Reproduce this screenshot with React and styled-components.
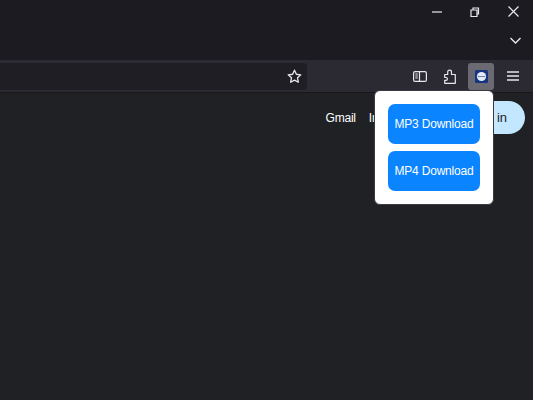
import React from 'react';
import styled, { createGlobalStyle } from 'styled-components';

const GlobalStyle = createGlobalStyle`
  html, body {
    margin: 0;
    padding: 0;
    background: #202124;
    overflow: hidden;
  }
`;

const Page = styled.div`
  position: relative;
  width: 533px;
  height: 400px;
  overflow: hidden;
  display: flex;
  flex-direction: column;
  background: #202124;
  font-family: "Liberation Sans", Arial, sans-serif;
`;

const TitleBar = styled.div`
  height: 60px;
  box-sizing: border-box;
  background: #1c1b22;
  display: flex;
  flex-direction: column;
  align-items: flex-end;
`;

const WindowControls = styled.div`
  display: flex;
  align-items: center;
  height: 23px;
  padding-right: 14px;
  gap: 28px;
  color: #e8e8ea;
`;

const TabChevron = styled.div`
  display: flex;
  margin-top: 14px;
  padding-right: 12px;
  color: #e8e8ea;
`;

const Toolbar = styled.div`
  height: 33px;
  box-sizing: border-box;
  background: #2b2a33;
  border-bottom: 1px solid #18171c;
  display: flex;
  align-items: center;
  color: #e8e8ea;
`;

const UrlBar = styled.div`
  width: 307px;
  height: 27px;
  background: #1f1e25;
  border-radius: 0 4px 4px 0;
  display: flex;
  align-items: center;
  justify-content: flex-end;
  padding-right: 5px;
  box-sizing: border-box;
`;

const ToolIcons = styled.div`
  flex: 1;
  display: flex;
  justify-content: flex-end;
  align-items: center;
  padding-right: 7px;
  gap: 4px;
`;

const ToolButton = styled.div`
  width: 26px;
  height: 27px;
  border-radius: 3px;
  display: flex;
  align-items: center;
  justify-content: center;
  margin: ${props => (props.$active ? '0 2px 0 1px' : '0')};
  background: ${props => (props.$active ? '#6b6a72' : 'transparent')};
`;

const PageHeader = styled.div`
  display: flex;
  justify-content: flex-end;
  align-items: center;
  padding: 8px 8px 0 0;
`;

const NavLink = styled.a`
  color: #fff;
  font-size: 12px;
  letter-spacing: -0.2px;
  margin-right: 13px;
`;

const SignIn = styled.div`
  width: 96px;
  height: 33px;
  margin-left: 9px;
  padding-right: 18px;
  box-sizing: border-box;
  border-radius: 17px;
  background: #c2e7ff;
  color: #202124;
  font-size: 13px;
  display: flex;
  align-items: center;
  justify-content: flex-end;
`;

const Popup = styled.div`
  position: absolute;
  left: 374px;
  top: 90px;
  width: 120px;
  height: 115px;
  box-sizing: border-box;
  padding: 13px;
  background: #fff;
  border-radius: 6px;
  border: 1px solid #3a3a40;
  display: flex;
  flex-direction: column;
  gap: 7px;
`;

const DownloadButton = styled.button`
  width: 92px;
  height: 40px;
  padding: 0;
  border: none;
  border-radius: 7px;
  background: #0a84ff;
  color: #fff;
  font-family: inherit;
  font-size: 12px;
  letter-spacing: -0.2px;
  white-space: nowrap;
`;

const Icon = styled.svg`
  display: block;
  fill: none;
  stroke: currentColor;
  stroke-width: ${props => props.$weight || 1.2};
`;

const App = () => (
  <Page>
    <GlobalStyle />
    <TitleBar>
      <WindowControls>
        <Icon width="10" height="10" viewBox="0 0 10 10"><path d="M0 5h10" /></Icon>
        <Icon width="10" height="10" viewBox="0 0 10 10"><path d="M1 3h6v6.500H1z M3 3V1h5.500v6H7" /></Icon>
        <Icon width="11" height="11" viewBox="0 0 11 11"><path d="M.5.5l10 10M10.500.5l-10 10" /></Icon>
      </WindowControls>
      <TabChevron>
        <Icon width="11" height="7" viewBox="0 0 11 7" $weight={1.4}><path d="M.5 1l5 5 5-5" /></Icon>
      </TabChevron>
    </TitleBar>
    <Toolbar>
      <UrlBar>
        <Icon width="15" height="15" viewBox="0 0 16 16" $weight={1.4}>
          <path d="M8 1.300l2 4.300 4.700.6-3.500 3.200.9 4.700L8 11.800l-4.100 2.300.9-4.700L1.300 6.200 6 5.600z" strokeLinejoin="round" />
        </Icon>
      </UrlBar>
      <ToolIcons>
        <ToolButton>
          <Icon width="14" height="11" viewBox="0 0 14 11">
            <rect x="0.600" y="0.600" width="12.800" height="9.800" rx="1.500" />
            <path d="M6.500 1v9M2.300 3h2.500M2.300 5h2.500M2.300 7h2.500" />
          </Icon>
        </ToolButton>
        <ToolButton>
          <Icon width="12" height="15" viewBox="0 0 12 15">
            <path d="M.7 5.500h3V3a1.900 1.900 0 0 1 3.800 0v2.500h3.800v8.800H.7v-3h1.300a1.400 1.400 0 0 0 0-2.800H.7z" strokeLinejoin="round" />
          </Icon>
        </ToolButton>
        <ToolButton $active>
          <svg width="13" height="13" viewBox="0 0 13 13">
            <rect width="13" height="13" rx="1.500" fill="#15357f" />
            <circle cx="6.500" cy="6.500" r="4.600" fill="#e6ebf5" />
            <path d="M2.500 6.500l1.500-1.100v.7h5v-.7l1.500 1.100-1.500 1.100v-.7h-5v.7z" fill="#6f84ad" />
          </svg>
        </ToolButton>
        <ToolButton>
          <Icon width="12" height="10" viewBox="0 0 12 10" $weight={1.3}><path d="M0 1h12M0 5h12M0 9h12" /></Icon>
        </ToolButton>
      </ToolIcons>
    </Toolbar>
    <PageHeader>
      <NavLink>Gmail</NavLink>
      <NavLink>Images</NavLink>
      <SignIn>Sign in</SignIn>
    </PageHeader>
    <Popup>
      <DownloadButton>MP3 Download</DownloadButton>
      <DownloadButton>MP4 Download</DownloadButton>
    </Popup>
  </Page>
);

export default App;
